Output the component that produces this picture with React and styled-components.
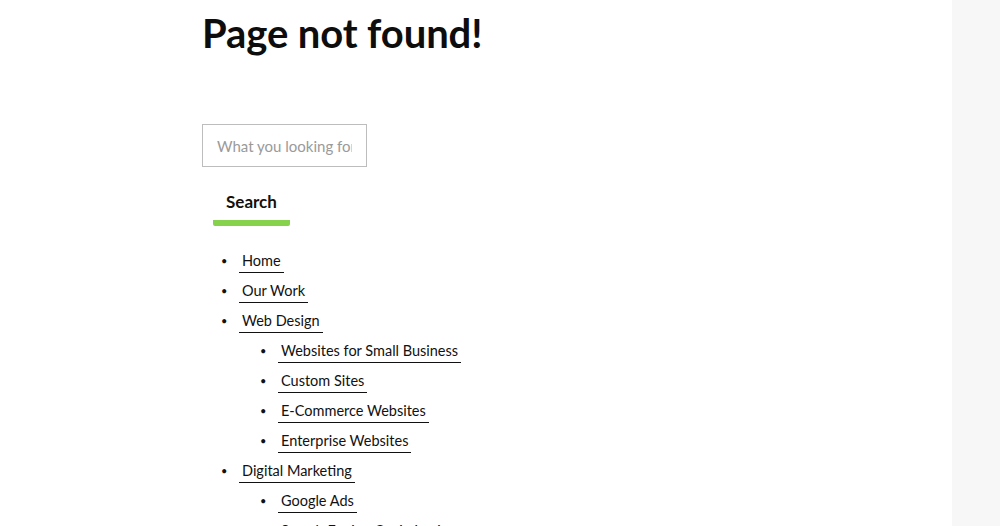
import React from 'react'
import styled, { createGlobalStyle } from 'styled-components'

const GlobalStyle = createGlobalStyle`
  html, body {
    margin: 0;
    padding: 0;
    background: #fff;
    font-family: "Lato", "Liberation Sans", sans-serif;
    color: #111;
    overflow: hidden;
  }
`

const Page = styled.div`
  display: flex;
  width: 1000px;
  height: 526px;
  overflow: hidden;
`

const Main = styled.main`
  flex: 1;
  padding: 6px 0 0 202px;
`

const Sidebar = styled.aside`
  width: 48px;
  background: #f7f7f7;
`

const Title = styled.h1`
  margin: 0;
  font-size: 40px;
  font-weight: 700;
  line-height: 54px;
  letter-spacing: -0.1px;
  color: #0d0d0d;
`

const SearchForm = styled.form`
  display: flex;
  flex-direction: column;
  align-items: flex-start;
  margin-top: 64px;
`

const SearchInput = styled.input`
  box-sizing: border-box;
  width: 165px;
  height: 43px;
  padding: 0 14px;
  border: 1px solid #bdbdbd;
  font-family: inherit;
  font-size: 15px;
  color: #333;
  outline: none;
  &::placeholder {
    color: #9a9a9a;
  }
`

const SearchButton = styled.button`
  margin: 18px 0 0 11px;
  padding: 6px 13px 8px;
  background: none;
  border: none;
  border-bottom: 6px solid #86d24c;
  border-radius: 2px;
  font-family: inherit;
  font-size: 17px;
  font-weight: 700;
  color: #111;
  cursor: pointer;
`

const Menu = styled.ul`
  list-style: none;
  margin: ${p => (p.nested ? '0' : '20px 0 0')};
  padding-left: ${p => (p.nested ? '39px' : '37px')};
`

const Item = styled.li`
  font-size: 14.5px;
  line-height: 22px;
  & > :first-child {
    margin: 4px 0 3px;
  }
  &::before {
    content: '•';
    float: left;
    width: 18px;
    margin-left: -18px;
    margin-top: 4px;
    font-size: 11px;
    line-height: 22px;
  }
`

const Link = styled.a`
  display: inline-block;
  vertical-align: top;
  padding: 0 3px;
  line-height: 22px;
  border-bottom: 1px solid #111;
  color: #111;
  text-decoration: none;
`

const menu = [
  { label: 'Home' },
  { label: 'Our Work' },
  {
    label: 'Web Design',
    children: [
      'Websites for Small Business',
      'Custom Sites',
      'E-Commerce Websites',
      'Enterprise Websites',
    ],
  },
  {
    label: 'Digital Marketing',
    children: ['Google Ads', 'Search Engine Optimization', 'Social Media Marketing'],
  },
]

export default function App() {
  return (
    <Page>
      <GlobalStyle />
      <Main>
        <Title>Page not found!</Title>
        <SearchForm onSubmit={e => e.preventDefault()}>
          <SearchInput placeholder="What you looking for" />
          <SearchButton type="submit">Search</SearchButton>
        </SearchForm>
        <Menu>
          {menu.map(item => (
            <Item key={item.label}>
              <Link href="#">{item.label}</Link>
              {item.children && (
                <Menu nested>
                  {item.children.map(c => (
                    <Item key={c}>
                      <Link href="#">{c}</Link>
                    </Item>
                  ))}
                </Menu>
              )}
            </Item>
          ))}
        </Menu>
      </Main>
      <Sidebar />
    </Page>
  )
}
